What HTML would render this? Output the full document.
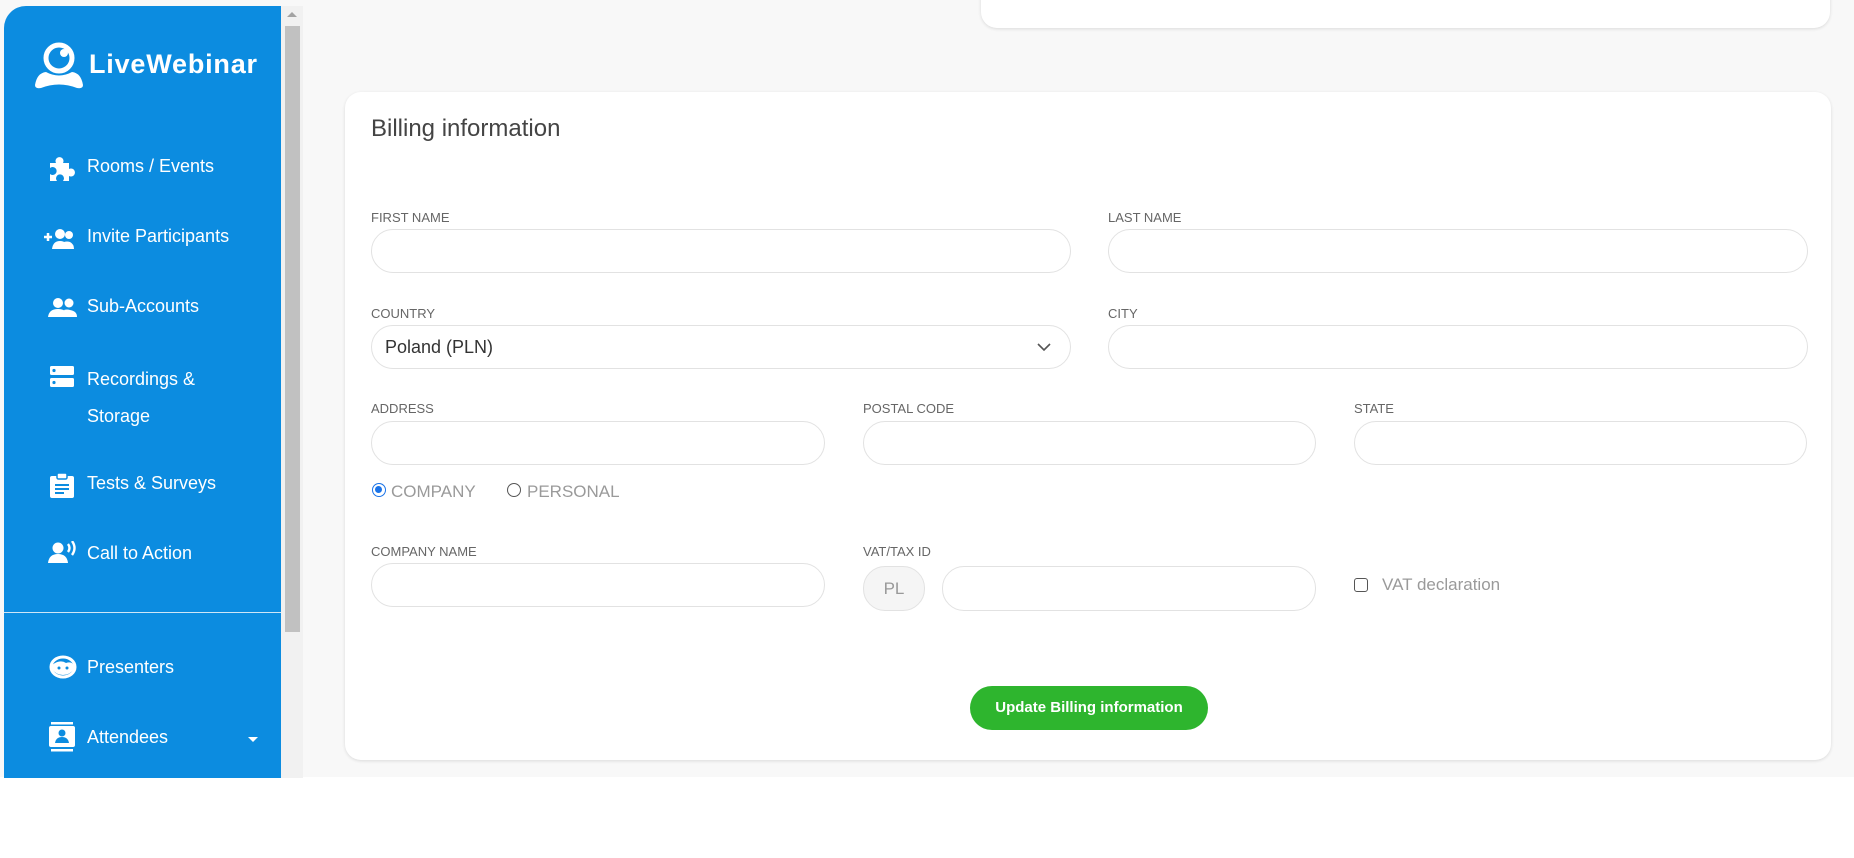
<!DOCTYPE html>
<html><head><meta charset="utf-8"><style>
*{box-sizing:border-box;margin:0;padding:0}
body{width:1854px;height:858px;background:#fff;font-family:"Liberation Sans",sans-serif;position:relative;overflow:hidden}
.main{position:absolute;left:0;top:0;width:1854px;height:777px;background:#f8f8f8}
.side{position:absolute;left:4px;top:6px;width:277px;height:772px;background:#0c8ce0;border-top-left-radius:22px;color:#fff}
.sb{position:absolute;left:281px;top:6px;width:22px;height:772px;background:#f1f1f1}
.thumb{position:absolute;left:285px;top:26px;width:15px;height:606px;background:#c1c1c1}
.item{position:absolute;left:83px;font-size:18px;color:#fff}
.ic{position:absolute;left:44px}
.card{position:absolute;background:#fff;border-radius:16px;box-shadow:0 1px 3px rgba(0,0,0,.12)}
.lbl{position:absolute;font-size:13px;color:#666}
.inp{position:absolute;height:44px;border:1px solid #e2e2e2;border-radius:22px;background:#fff}
.opt{position:absolute;font-size:17px;color:#9a9a9a}
</style></head><body>
<div class="main"></div>
<div class="card" style="left:981px;top:-20px;width:849px;height:48px"></div>
<div class="side">
 <svg style="position:absolute;left:28px;top:35px" width="54" height="50" viewBox="0 0 54 50"><circle cx="27" cy="17" r="13" fill="none" stroke="#fff" stroke-width="5"/><circle cx="32" cy="12" r="4" fill="#fff"/><path d="M3 44 Q5 32 14 31 Q27 38 40 31 Q49 32 51 44 Q51 48 45 47 Q27 40 9 47 Q3 48 3 44Z" fill="#fff"/></svg>
 <div style="position:absolute;left:85px;top:43px;font-size:27px;font-weight:bold;letter-spacing:0.8px">LiveWebinar</div>
 <svg class="ic" style="top:151px" width="28" height="24" viewBox="0 0 28 24"><path d="M2 6h6a4 4 0 1 1 7 0h6v6a4 4 0 1 1 0 7v5h-6a4 4 0 1 0-6 0H2v-7a4 4 0 1 0 0-6z" fill="#fff"/></svg>
 <div class="item" style="top:150px">Rooms / Events</div>
 <svg class="ic" style="top:222px;left:40px" width="32" height="22" viewBox="0 0 32 22"><path d="M0 9h8M4 5v8" stroke="#fff" stroke-width="2.5"/><circle cx="16" cy="6" r="5" fill="#fff"/><circle cx="25" cy="7" r="4" fill="#fff"/><path d="M8 21q1-8 8-8t8 8zM22 21q0-5-2-7 3-1 6 0 4 2 4 7z" fill="#fff"/></svg>
 <div class="item" style="top:220px">Invite Participants</div>
 <svg class="ic" style="top:291px" width="30" height="22" viewBox="0 0 30 22"><circle cx="10" cy="6" r="5" fill="#fff"/><circle cx="21" cy="6" r="4.5" fill="#fff"/><path d="M0 20q1-8 10-8t10 8zM18 20q0-5-2-7 3-1 6 0 7 1 7 7z" fill="#fff"/></svg>
 <div class="item" style="top:290px">Sub-Accounts</div>
 <svg class="ic" style="top:360px;left:46px" width="24" height="22" viewBox="0 0 24 22"><rect x="0" y="0" width="24" height="9" rx="1.5" fill="#fff"/><rect x="0" y="12" width="24" height="9" rx="1.5" fill="#fff"/><circle cx="4" cy="4.5" r="1.6" fill="#0c8ce0"/><circle cx="4" cy="16.5" r="1.6" fill="#0c8ce0"/></svg>
 <div class="item" style="top:355px;line-height:37px">Recordings &amp;<br>Storage</div>
 <svg class="ic" style="top:466px;left:46px" width="24" height="26" viewBox="0 0 24 26"><rect x="0" y="4" width="24" height="22" rx="2" fill="#fff"/><rect x="7" y="1" width="10" height="6" rx="1.5" fill="#fff" stroke="#0c8ce0" stroke-width="1.5"/><path d="M5 13h14M5 17h14M5 21h9" stroke="#0c8ce0" stroke-width="2"/></svg>
 <div class="item" style="top:467px">Tests &amp; Surveys</div>
 <svg class="ic" style="top:535px" width="30" height="24" viewBox="0 0 30 24"><circle cx="10" cy="7" r="5.5" fill="#fff"/><path d="M0 22q1-9 10-9t10 9z" fill="#fff"/><path d="M20 3q3 4 0 8M24 0q5 7 0 14" stroke="#fff" stroke-width="2.4" fill="none"/></svg>
 <div class="item" style="top:537px">Call to Action</div>
 <div style="position:absolute;left:0;top:606px;width:277px;height:1px;background:#cfe6f7"></div>
 <svg class="ic" style="top:649px;left:45px" width="28" height="24" viewBox="0 0 28 24"><ellipse cx="14" cy="12" rx="12" ry="10" fill="none" stroke="#fff" stroke-width="3"/><path d="M3 10q8-6 14-2 5-2 8 2v4q-4 6-11 6-7 0-11-6z" fill="#fff"/><circle cx="10" cy="13" r="1.5" fill="#0c8ce0"/><circle cx="18" cy="13" r="1.5" fill="#0c8ce0"/></svg>
 <div class="item" style="top:651px">Presenters</div>
 <svg class="ic" style="top:716px;left:45px" width="26" height="30" viewBox="0 0 26 30"><rect x="2" y="0" width="22" height="2.5" fill="#fff"/><rect x="0" y="4" width="26" height="21" rx="2" fill="#fff"/><rect x="2" y="27" width="22" height="2.5" fill="#fff"/><circle cx="13" cy="11" r="3.5" fill="#0c8ce0"/><path d="M6 21q1-6 7-6t7 6z" fill="#0c8ce0"/></svg>
 <div class="item" style="top:721px">Attendees</div>
 <div style="position:absolute;left:244px;top:731px;border-left:5px solid transparent;border-right:5px solid transparent;border-top:5px solid #fff"></div>
</div>
<div class="sb"></div>
<div style="position:absolute;left:287px;top:12px;border-left:5px solid transparent;border-right:5px solid transparent;border-bottom:5px solid #a3a3a3"></div>
<div class="thumb"></div>

<div class="card" style="left:345px;top:92px;width:1486px;height:668px"></div>
<div style="position:absolute;left:371px;top:115px;font-size:24px;color:#444">Billing information</div>

<div class="lbl" style="left:371px;top:210px">FIRST NAME</div>
<div class="inp" style="left:371px;top:229px;width:700px"></div>
<div class="lbl" style="left:1108px;top:210px">LAST NAME</div>
<div class="inp" style="left:1108px;top:229px;width:700px"></div>

<div class="lbl" style="left:371px;top:306px">COUNTRY</div>
<div class="inp" style="left:371px;top:325px;width:700px"></div>
<div style="position:absolute;left:385px;top:337px;font-size:18px;color:#333">Poland (PLN)</div>
<svg style="position:absolute;left:1037px;top:342px" width="14" height="10" viewBox="0 0 14 10"><path d="M1 2l6 6 6-6" stroke="#555" stroke-width="1.6" fill="none"/></svg>
<div class="lbl" style="left:1108px;top:306px">CITY</div>
<div class="inp" style="left:1108px;top:325px;width:700px"></div>

<div class="lbl" style="left:371px;top:401px">ADDRESS</div>
<div class="inp" style="left:371px;top:421px;width:454px"></div>
<div class="lbl" style="left:863px;top:401px">POSTAL CODE</div>
<div class="inp" style="left:863px;top:421px;width:453px"></div>
<div class="lbl" style="left:1354px;top:401px">STATE</div>
<div class="inp" style="left:1354px;top:421px;width:453px"></div>

<div style="position:absolute;left:372px;top:483px;width:14px;height:14px;border-radius:50%;border:1.5px solid #1a73e8"><div style="margin:2px;width:7px;height:7px;border-radius:50%;background:#1a73e8"></div></div>
<div class="opt" style="left:391px;top:482px">COMPANY</div>
<div style="position:absolute;left:507px;top:483px;width:14px;height:14px;border-radius:50%;border:1.5px solid #555"></div>
<div class="opt" style="left:527px;top:482px">PERSONAL</div>

<div class="lbl" style="left:371px;top:544px">COMPANY NAME</div>
<div class="inp" style="left:371px;top:563px;width:454px"></div>
<div class="lbl" style="left:863px;top:544px">VAT/TAX ID</div>
<div style="position:absolute;left:863px;top:566px;width:62px;height:45px;border:1px solid #e2e2e2;border-radius:22px;background:#f5f5f5;color:#999;font-size:17px;text-align:center;line-height:43px">PL</div>
<div class="inp" style="left:942px;top:566px;width:374px;height:45px"></div>
<div style="position:absolute;left:1354px;top:578px;width:14px;height:14px;border-radius:3px;border:1.5px solid #555"></div>
<div class="opt" style="left:1382px;top:575px">VAT declaration</div>

<div style="position:absolute;left:970px;top:686px;width:238px;height:44px;border-radius:22px;background:#2eb52e;color:#fff;font-weight:bold;font-size:15px;text-align:center;line-height:44px">Update Billing information</div>
</body></html>
